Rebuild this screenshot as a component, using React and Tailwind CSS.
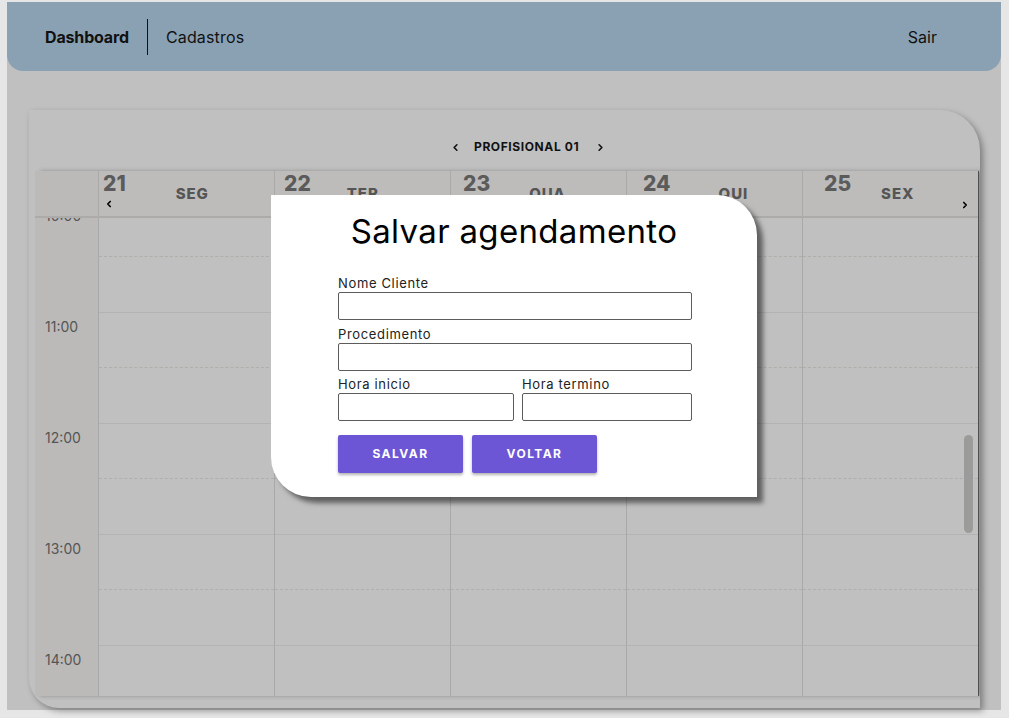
import { ChevronLeft, ChevronRight } from "lucide-react";

const days = [
  { num: "21", name: "SEG", numMl: "ml-[4px]", nameMl: "ml-[50px]", prev: true },
  { num: "22", name: "TER", numMl: "ml-[9px]", nameMl: "ml-[36px]" },
  { num: "23", name: "QUA", numMl: "ml-[12px]", nameMl: "ml-[39px]" },
  { num: "24", name: "QUI", numMl: "ml-[16px]", nameMl: "ml-[48px]" },
  { num: "25", name: "SEX", numMl: "ml-[21px]", nameMl: "ml-[30px]", next: true },
];

const hours = ["10:00", "11:00", "12:00", "13:00", "14:00", ""];

function Field({ label, className }) {
  return (
    <div className={className}>
      <div className="h-[17px] text-[13px] leading-[17px] tracking-[0.05em] text-[#222]">{label}</div>
      <div className="h-[28px] rounded-[2px] border border-[#5c5c5c] bg-white" />
    </div>
  );
}

function Modal() {
  return (
    <div className="absolute left-[264px] top-[193px] w-[486px] h-[302px] bg-white rounded-tr-[40px] rounded-bl-[40px] shadow-[6px_6px_5px_rgba(0,0,0,0.5)] font-['Inter',sans-serif]">
      <div className="pt-[16px] text-center text-[33px] leading-[40px] tracking-[0.01em] text-black">Salvar agendamento</div>
      <div className="ml-[67px] mt-[24px] w-[354px]">
        <Field label="Nome Cliente" />
        <Field label="Procedimento" className="mt-[6px]" />
        <div className="mt-[5px] flex gap-[8px]">
          <Field label="Hora inicio" className="w-[176px]" />
          <Field label="Hora termino" className="flex-1" />
        </div>
        <div className="mt-[14px] flex gap-[9px]">
          <button className="w-[125px] h-[38px] rounded-[2px] bg-[#6c56d6] text-white text-[12px] font-bold tracking-[0.12em] shadow-[0_2px_3px_rgba(0,0,0,0.3)]">
            SALVAR
          </button>
          <button className="w-[125px] h-[38px] rounded-[2px] bg-[#6c56d6] text-white text-[12px] font-bold tracking-[0.12em] shadow-[0_2px_3px_rgba(0,0,0,0.3)]">
            VOLTAR
          </button>
        </div>
      </div>
    </div>
  );
}

function Calendar() {
  return (
    <div className="ml-[22px] mt-[39px] w-[951px] h-[598px] bg-[#c0c0c0] rounded-tr-[40px] rounded-bl-[30px] shadow-[3px_3px_6px_rgba(0,0,0,0.35)] overflow-hidden font-['Inter',sans-serif]">
      <div className="h-[61px] flex items-start pt-[29px] pl-[421px] text-[12px] font-bold text-[#111]">
        <ChevronLeft size={11} strokeWidth={3.5} className="mt-[3px]" />
        <span className="ml-[13px] leading-[16px] tracking-[0.05em]">PROFISIONAL 01</span>
        <ChevronRight size={11} strokeWidth={3.5} className="ml-[16px] mt-[3px]" />
      </div>
      <div className="ml-[6px] w-[944px] border-r border-[#4f4f4f] shadow-[5px_0_4px_rgba(0,0,0,0.25)]">
        <div className="flex h-[47px] border-b-2 border-[#acabaa] bg-[#bdbcba]">
          <div className="w-[63px] bg-[#bbbab8]" />
          {days.map((d) => (
            <div key={d.num} className="relative w-[176px] border-l border-[#a9a9a9] flex">
              <span className={`${d.numMl} mt-[1px] text-[21px] leading-[24px] font-extrabold text-[#5b5b5b]`}>{d.num}</span>
              <span className={`${d.nameMl} mt-[14px] text-[15px] leading-[18px] font-extrabold tracking-[0.06em] text-[#555]`}>{d.name}</span>
              {d.prev && <ChevronLeft size={10} strokeWidth={4} className="absolute left-[5px] top-[28px] text-black" />}
              {d.next && <ChevronRight size={10} strokeWidth={4} className="absolute right-[8px] top-[29px] text-black" />}
            </div>
          ))}
        </div>
        <div className="relative h-[478px] overflow-hidden flex">
          <div className="w-[63px] bg-[#bbbab8] mt-[-17px]">
            {hours.map((h, i) => (
              <div key={i} className="h-[111px] pt-[5px] pl-[10px] text-[14px] leading-[20px] text-[#555]">{h}</div>
            ))}
          </div>
          {days.map((d) => (
            <div key={d.num} className="w-[176px] border-l border-[#a9a9a9] mt-[-17px]">
              {hours.map((h, i) => (
                <div key={i} className="h-[111px] border-t border-[#b3b3b3]">
                  <div className="h-[55px] border-b border-dashed border-[#b0afab]" />
                </div>
              ))}
            </div>
          ))}
          <div className="absolute right-[5px] top-[217px] w-[9px] h-[98px] rounded-full bg-[#9b9b99]" />
        </div>
      </div>
    </div>
  );
}

export default function App() {
  return (
    <div className="w-[1009px] h-[718px] overflow-hidden bg-[#e6e6e6] pt-[2px]">
      <div className="relative ml-[7px] w-[994px] h-[708px] bg-[#c0c0c0]">
        <div className="h-[69px] bg-[#8aa1b4] rounded-b-[16px] flex items-center px-[38px] font-['Inter',sans-serif] text-[16px] text-[#111]">
          <span className="font-bold tracking-[-0.01em]">Dashboard</span>
          <span className="mx-[18px] w-px h-[36px] bg-[#111]" />
          <span className="tracking-[0.01em]">Cadastros</span>
          <span className="ml-auto mr-[26px]">Sair</span>
        </div>
        <Calendar />
        <Modal />
      </div>
    </div>
  );
}
